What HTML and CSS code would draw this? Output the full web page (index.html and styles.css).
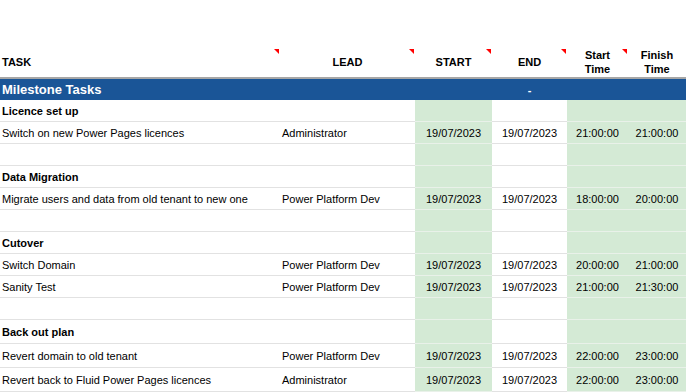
FILE: index.html
```html
<!DOCTYPE html>
<html lang="en">
<head>
    <meta charset="UTF-8">
    <meta name="viewport" content="width=device-width, initial-scale=1.0">
    <title>Milestone Tasks</title>
    <link rel="stylesheet" href="styles.css">
</head>
<body>
    <div class="sheet">
        <div class="row head-row">
            <div class="cell th left note">TASK</div>
            <div class="cell th note">LEAD</div>
            <div class="cell th note">START</div>
            <div class="cell th note">END</div>
            <div class="cell th note">Start<br>Time</div>
            <div class="cell th">Finish<br>Time</div>
        </div>

        <div class="row band">
            <div class="cell left title">Milestone Tasks</div>
            <div class="cell"></div>
            <div class="cell"></div>
            <div class="cell">-</div>
            <div class="cell"></div>
            <div class="cell"></div>
        </div>

        <div class="row">
            <div class="cell left bold">Licence set up</div>
            <div class="cell"></div>
            <div class="cell green"></div>
            <div class="cell"></div>
            <div class="cell green"></div>
            <div class="cell green"></div>
        </div>
        <div class="row">
            <div class="cell left">Switch on new Power Pages licences</div>
            <div class="cell left">Administrator</div>
            <div class="cell green">19/07/2023</div>
            <div class="cell">19/07/2023</div>
            <div class="cell green">21:00:00</div>
            <div class="cell green">21:00:00</div>
        </div>
        <div class="row">
            <div class="cell"></div>
            <div class="cell"></div>
            <div class="cell green"></div>
            <div class="cell"></div>
            <div class="cell green"></div>
            <div class="cell green"></div>
        </div>

        <div class="row">
            <div class="cell left bold">Data Migration</div>
            <div class="cell"></div>
            <div class="cell green"></div>
            <div class="cell"></div>
            <div class="cell green"></div>
            <div class="cell green"></div>
        </div>
        <div class="row">
            <div class="cell left">Migrate users and data from old tenant to new one</div>
            <div class="cell left">Power Platform Dev</div>
            <div class="cell green">19/07/2023</div>
            <div class="cell">19/07/2023</div>
            <div class="cell green">18:00:00</div>
            <div class="cell green">20:00:00</div>
        </div>
        <div class="row">
            <div class="cell"></div>
            <div class="cell"></div>
            <div class="cell green"></div>
            <div class="cell"></div>
            <div class="cell green"></div>
            <div class="cell green"></div>
        </div>

        <div class="row">
            <div class="cell left bold">Cutover</div>
            <div class="cell"></div>
            <div class="cell green"></div>
            <div class="cell"></div>
            <div class="cell green"></div>
            <div class="cell green"></div>
        </div>
        <div class="row">
            <div class="cell left">Switch Domain</div>
            <div class="cell left">Power Platform Dev</div>
            <div class="cell green">19/07/2023</div>
            <div class="cell">19/07/2023</div>
            <div class="cell green">20:00:00</div>
            <div class="cell green">21:00:00</div>
        </div>
        <div class="row">
            <div class="cell left">Sanity Test</div>
            <div class="cell left">Power Platform Dev</div>
            <div class="cell green">19/07/2023</div>
            <div class="cell">19/07/2023</div>
            <div class="cell green">21:00:00</div>
            <div class="cell green">21:30:00</div>
        </div>
        <div class="row">
            <div class="cell"></div>
            <div class="cell"></div>
            <div class="cell green"></div>
            <div class="cell"></div>
            <div class="cell green"></div>
            <div class="cell green"></div>
        </div>

        <div class="row tall">
            <div class="cell left bold">Back out plan</div>
            <div class="cell"></div>
            <div class="cell green"></div>
            <div class="cell"></div>
            <div class="cell green"></div>
            <div class="cell green"></div>
        </div>
        <div class="row tall">
            <div class="cell left">Revert domain to old tenant</div>
            <div class="cell left">Power Platform Dev</div>
            <div class="cell green">19/07/2023</div>
            <div class="cell">19/07/2023</div>
            <div class="cell green">22:00:00</div>
            <div class="cell green">23:00:00</div>
        </div>
        <div class="row tall">
            <div class="cell left">Revert back to Fluid Power Pages licences</div>
            <div class="cell left">Administrator</div>
            <div class="cell green">19/07/2023</div>
            <div class="cell">19/07/2023</div>
            <div class="cell green">22:00:00</div>
            <div class="cell green">23:00:00</div>
        </div>
    </div>
</body>
</html>
```

FILE: styles.css
```css
body {
    margin: 0;
    background-color: #fff;
    font-family: "Liberation Sans", Arial, sans-serif;
    font-size: 11px;
    color: #000;
}
.sheet {
    padding-top: 48px;
    width: 686px;
}
.row {
    display: grid;
    grid-template-columns: 280px 135px 77px 75px 61px 58px;
    height: 22px;
}
.row.tall {
    height: 24px;
}
.cell {
    box-sizing: border-box;
    display: flex;
    align-items: center;
    justify-content: center;
    text-align: center;
    border-bottom: 1px solid #e2e2e2;
    white-space: nowrap;
    overflow: hidden;
}
.cell.left {
    justify-content: flex-start;
    padding-left: 2px;
}
.cell.green {
    background-color: #d4ead5;
    border-bottom-color: #e9f1e9;
}
.bold {
    font-weight: bold;
}

/* header */
.head-row {
    height: 31px;
}
.th {
    position: relative;
    font-weight: bold;
    line-height: 14px;
    height: 31px;
    padding-bottom: 2px;
    border-bottom: 2px solid #a6a6a6;
}
.note::after {
    content: "";
    position: absolute;
    top: 1px;
    right: 1px;
    border-top: 5px solid #f00;
    border-left: 5px solid transparent;
}

/* blue band */
.band {
    height: 21px;
    background-color: #1a5597;
    color: #fff;
}
.band .cell {
    border-bottom: none;
    font-weight: bold;
}
.band .title {
    font-size: 13px;
}
```
